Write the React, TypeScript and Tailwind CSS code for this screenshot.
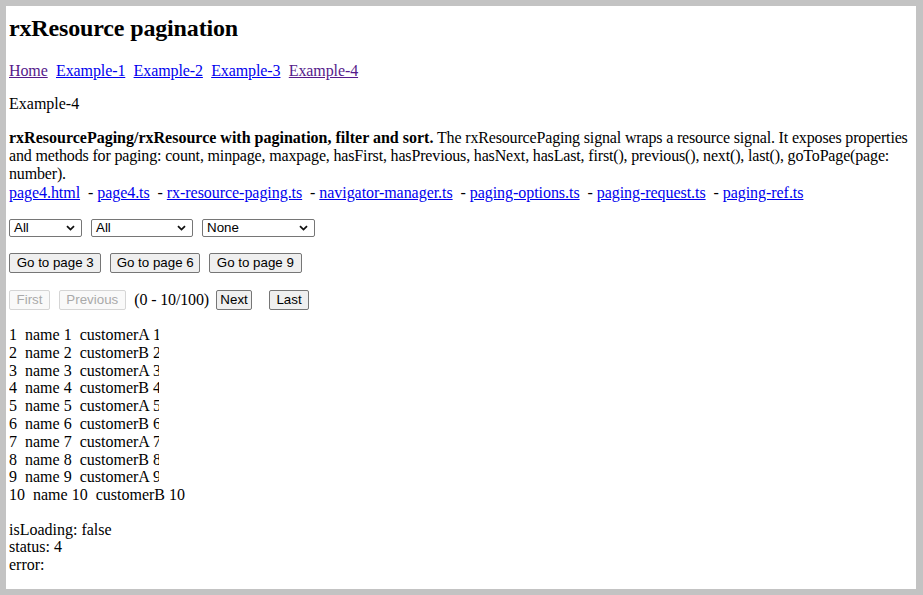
import React from 'react';

const serif = "font-['Liberation_Serif','Times_New_Roman',serif]";
const sans = "font-['Liberation_Sans',Arial,sans-serif]";

const navLinks = [
    { label: 'Home', visited: true },
    { label: 'Example-1', visited: false },
    { label: 'Example-2', visited: false },
    { label: 'Example-3', visited: false },
    { label: 'Example-4', visited: true },
];

const sourceFiles = [
    'page4.html',
    'page4.ts',
    'rx-resource-paging.ts',
    'navigator-manager.ts',
    'paging-options.ts',
    'paging-request.ts',
    'paging-ref.ts',
];

const rows = Array.from({ length: 10 }, (_, i) => ({
    id: i + 1,
    name: `name ${i + 1}`,
    customer: `customer${i % 2 === 0 ? 'A' : 'B'} ${i + 1}`,
}));

function Chevron() {
    return (
        <svg width="9" height="6" viewBox="0 0 9 6" className="pointer-events-none">
            <path d="M1 1.2 L4.5 4.6 L8 1.2" fill="none" stroke="#111" strokeWidth="1.8" />
        </svg>
    );
}

function FakeSelect({ value, width }: { value: string; width: string }) {
    return (
        <div
            className={`${width} h-[18px] flex items-center justify-between border border-[#767676] rounded-[2px] bg-white pl-[4px] pr-[6px] ${sans} text-[13.33px] leading-[16px] text-black`}
        >
            <span>{value}</span>
            <Chevron />
        </div>
    );
}

function Btn({ children, disabled, className = '' }: { children: React.ReactNode; disabled?: boolean; className?: string }) {
    return (
        <button
            disabled={disabled}
            className={`h-[20px] flex items-center justify-center rounded-[2px] border whitespace-nowrap ${sans} text-[13.33px] leading-[16px] ${className} ${
                disabled
                    ? 'bg-[#f9f9f9] border-[#d5d5d5] text-[#a9a9a9]'
                    : 'bg-[#efefef] border-[#767676] text-black'
            }`}
        >
            {children}
        </button>
    );
}

export default function App() {
    return (
        <div className="w-[923px] h-[595px] bg-[#c3c3c3] pt-[6px] pl-[6px] pr-[7px] pb-[6px]">
            <div className={`h-full bg-white pl-[3px] pr-[2px] overflow-hidden ${serif} text-[16px] text-black`}>
                {/* Title */}
                <h1 className="mt-[8px] text-[24px] leading-[28px] font-bold tracking-[-0.15px]">rxResource pagination</h1>

                {/* Nav */}
                <div className="mt-[20px] flex gap-[8.3px] leading-[18px] tracking-[-0.1px]">
                    {navLinks.map((l) => (
                        <a
                            key={l.label}
                            href="#"
                            className={`underline ${l.visited ? 'text-[#551a8b]' : 'text-[#0000ee]'}`}
                        >
                            {l.label}
                        </a>
                    ))}
                </div>

                <p className="mt-[15px] leading-[18px]">Example-4</p>

                {/* Description */}
                <p className="mt-[16px] leading-[18px]">
                    <b>rxResourcePaging/rxResource with pagination, filter and sort.</b>
                    <span className="tracking-[-0.16px]">
                        {' '}
                        The rxResourcePaging signal wraps a resource signal. It exposes properties and methods for
                        paging: count, minpage, maxpage, hasFirst, hasPrevious, hasNext, hasLast, first(), previous(),
                        next(), last(), goToPage(page: number).
                    </span>
                </p>
                <div className="mt-[1px] leading-[18px] tracking-[-0.05px]">
                    {sourceFiles.map((f, i) => (
                        <React.Fragment key={f}>
                            {i > 0 && <span>{'\u00a0 - '}</span>}
                            <a href="#" className="underline text-[#0000ee]">
                                {f}
                            </a>
                        </React.Fragment>
                    ))}
                </div>

                {/* Filters */}
                <div className="mt-[17px] flex gap-[9px]">
                    <FakeSelect value="All" width="w-[73px]" />
                    <FakeSelect value="All" width="w-[102px]" />
                    <FakeSelect value="None" width="w-[113px]" />
                </div>

                {/* Go to */}
                <div className="mt-[16px] flex gap-[8.6px]">
                    <Btn className="w-[92.4px]">Go to page 3</Btn>
                    <Btn className="w-[90.4px]">Go to page 6</Btn>
                    <Btn className="w-[92.7px]">Go to page 9</Btn>
                </div>

                {/* Pager */}
                <div className="mt-[17px] flex items-center">
                    <Btn disabled className="w-[41px]">First</Btn>
                    <Btn disabled className="ml-[8.6px] w-[67.4px]">Previous</Btn>
                    <span className="ml-[8.3px] leading-[18px] tracking-[-0.15px]">(0 - 10/100)</span>
                    <Btn className="ml-[7px] w-[36.3px]">Next</Btn>
                    <Btn className="ml-[16.7px] w-[40.3px]">Last</Btn>
                </div>

                {/* Rows */}
                <div className="mt-[16px] leading-[17.8px]">
                    {rows.map((r, i) => (
                        <div
                            key={r.id}
                            className={i < 9 ? 'w-[150px] overflow-hidden whitespace-nowrap' : 'whitespace-nowrap'}
                        >
                            {r.id}
                            {'\u00a0\u00a0'}
                            {r.name}
                            {'\u00a0\u00a0'}
                            {r.customer}
                        </div>
                    ))}
                </div>

                {/* Status */}
                <div className="mt-[17px] leading-[17.5px]">
                    <div>isLoading: false</div>
                    <div>status: 4</div>
                    <div>error:</div>
                </div>
            </div>
        </div>
    );
}
